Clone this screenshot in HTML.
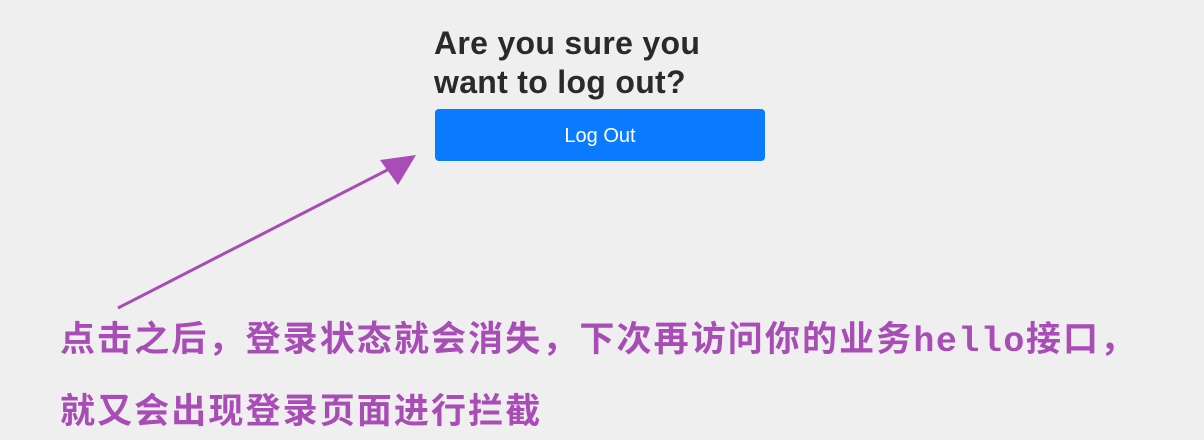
<!DOCTYPE html>
<html><head><meta charset="utf-8"><style>
body{margin:0;width:1204px;height:440px;background:#efefef;position:relative;overflow:hidden;font-family:"Liberation Sans",sans-serif}
h1{position:absolute;left:434px;top:24px;margin:0;font-size:32px;line-height:39px;font-weight:bold;color:#2a2a2a;width:340px;letter-spacing:0.3px}
.btn{position:absolute;left:435px;top:109px;width:330px;height:52px;background:#0a7bff;border-radius:4px;color:#fff;font-size:20px;text-align:center;line-height:54px}
.t{position:absolute;left:60px;font-family:"Liberation Sans","Noto Sans CJK SC",sans-serif;font-size:35px;font-weight:bold;color:#a84cb6;letter-spacing:2.1px;white-space:nowrap;line-height:40px}
.m{font-family:"Liberation Mono",monospace;letter-spacing:1.5px}
</style></head><body>
<h1>Are you sure you want to log out?</h1>
<div class="btn">Log Out</div>
<svg style="position:absolute;left:0;top:0" width="1204" height="440">
<line x1="118" y1="308" x2="395" y2="166" stroke="#a84cb6" stroke-width="3"/>
<polygon points="416,155 380,160 398,185" fill="#a84cb6"/>
</svg>
<div class="t" style="top:320px">点击之后，登录状态就会消失，下次再访问你的业务<span class="m">hello</span>接口，</div>
<div class="t" style="top:392px">就又会出现登录页面进行拦截</div>
</body></html>
